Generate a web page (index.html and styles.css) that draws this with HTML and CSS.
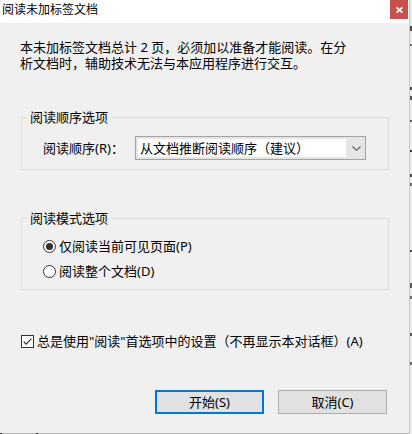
FILE: index.html
```html
<!DOCTYPE html>
<html lang="zh-CN">
<head>
<meta charset="utf-8">
<title>阅读未加标签文档</title>
<link rel="stylesheet" href="styles.css">
</head>
<body>
<div class="dialog">
  <div class="titlebar">
    <span class="title">阅读未加标签文档</span>
    <span class="close"><svg width="7" height="6" viewBox="0 0 7 6"><path d="M0.6 0.4 L6.4 5.6 M6.4 0.4 L0.6 5.6" stroke="#fff" stroke-width="1.8" fill="none"/></svg></span>
  </div>
  <div class="content">
    <p class="message">本未加标签文档总计 2 页，必须加以准备才能阅读。在分析文档时，辅助技术无法与本应用程序进行交互。</p>
    <fieldset class="group group-order">
      <legend>阅读顺序选项</legend>
      <div class="field-row">
        <span class="field-label">阅读顺序(R)：</span>
        <div class="combo">
          <span class="combo-field">从文档推断阅读顺序（建议）</span>
          <span class="combo-arrow"><svg width="9" height="5" viewBox="0 0 9 5"><path d="M0.5 0.5 L4.5 4.3 L8.5 0.5" stroke="#5a5a5a" stroke-width="1.1" fill="none"/></svg></span>
        </div>
      </div>
    </fieldset>
    <fieldset class="group group-mode">
      <legend>阅读模式选项</legend>
      <label class="radio-row">
        <svg class="radio" width="13" height="13" viewBox="0 0 13 13"><circle cx="6.5" cy="6.5" r="6" fill="#fff" stroke="#333"/><circle cx="6.5" cy="6.5" r="3.6" fill="#333"/></svg>
        <span>仅阅读当前可见页面(P)</span>
      </label>
      <label class="radio-row">
        <svg class="radio" width="13" height="13" viewBox="0 0 13 13"><circle cx="6.5" cy="6.5" r="6" fill="#fff" stroke="#333"/></svg>
        <span>阅读整个文档(D)</span>
      </label>
    </fieldset>
    <label class="check-row">
      <svg class="checkbox" width="13" height="13" viewBox="0 0 13 13"><rect x="0.5" y="0.5" width="12" height="12" fill="#fff" stroke="#333"/><path d="M2.6 6.6 L5.2 9.2 L10.4 3.6" stroke="#333" stroke-width="1.2" fill="none"/></svg>
      <span>总是使用"阅读"首选项中的设置（不再显示本对话框）(A)</span>
    </label>
    <div class="buttons">
      <button class="btn btn-default">开始(S)</button>
      <button class="btn">取消(C)</button>
    </div>
  </div>
</div>
<div class="edge-right"></div>
<div class="edge-bottom"></div>
</body>
</html>
```
FILE: styles.css
```css
* { box-sizing: border-box; }
html, body { margin: 0; }
body {
  width: 412px;
  height: 434px;
  overflow: hidden;
  display: grid;
  grid-template-columns: 409px 3px;
  grid-template-rows: 433px 1px;
  font-family: "Noto Sans", "Noto Sans CJK SC", sans-serif;
  font-size: 13px;
  color: #000;
  background: #f4f4f4;
}
.dialog {
  background: #f0f0f0;
  display: flex;
  flex-direction: column;
}
.titlebar {
  height: 23px;
  background: #fff;
  display: flex;
  justify-content: space-between;
  align-items: flex-start;
}
.title {
  font-size: 12px;
  line-height: 16px;
  padding: 2px 0 0 2px;
}
.close {
  width: 18px;
  height: 19px;
  margin-right: 1px;
  background: #c75050;
  display: flex;
  align-items: center;
  justify-content: center;
}
.content {
  padding: 16px 20px 0 21px;
  display: flex;
  flex-direction: column;
}
.message {
  margin: 0 0 0 -1px;
  width: 332px;
  line-height: 16px;
}
.group {
  margin: 0;
  width: 368px;
  border: 1px solid #dcdcdc;
  min-inline-size: 0;
}
.group legend {
  margin-left: -16px;
  padding: 0 3px;
  line-height: 16px;
}
.group-order {
  margin-top: 38px;
  padding: 11px 0 9px 21px;
}
.group-mode {
  margin-top: 40px;
  padding: 10px 0 8px 21px;
  display: flex;
  flex-direction: column;
  gap: 5px;
}
.field-row {
  display: flex;
  align-items: center;
}
.field-label {
  width: 92px;
  line-height: 24px;
}
.combo {
  width: 231px;
  height: 24px;
  border: 1px solid #a3a3a3;
  background: #e5e5e5;
  padding: 2px 0 2px 2px;
  display: flex;
}
.combo-field {
  width: 208px;
  background: #fff;
  line-height: 18px;
  padding-left: 2px;
  white-space: nowrap;
}
.combo-arrow {
  flex: 1;
  display: flex;
  align-items: center;
  justify-content: center;
  padding-left: 2px;
}
.radio-row, .check-row {
  display: flex;
  align-items: center;
  gap: 3px;
  height: 20px;
  line-height: 20px;
}
.radio, .checkbox { flex: none; }
.check-row {
  margin-top: 41px;
}
.buttons {
  margin-top: 39px;
  padding-right: 2px;
  display: flex;
  justify-content: flex-end;
  gap: 14px;
}
.btn {
  width: 109px;
  height: 24px;
  padding: 0;
  font: inherit;
  color: #000;
  background: #e1e1e1;
  border: 1px solid #adadad;
  line-height: 20px;
}
.btn-default {
  border: 2px solid #0078d7;
}
.edge-right {
  grid-row: 1 / 3;
  grid-column: 2;
  border-left: 1px solid #c8c8c8;
  background:
    linear-gradient(to bottom,
      transparent 26px, #4a4a4a 26px, #4a4a4a 31px, transparent 31px,
      transparent 44px, #6a6a6a 44px, #6a6a6a 46px, transparent 46px,
      transparent 87px, #4a4a4a 87px, #4a4a4a 90px, transparent 90px,
      transparent 96px, #5a5a5a 96px, #5a5a5a 100px, transparent 100px,
      transparent 120px, #5a5a5a 120px, #5a5a5a 122px, transparent 122px,
      transparent 150px, #3a3a3a 150px, #3a3a3a 152px, transparent 152px,
      transparent 174px, #4a4a4a 174px, #4a4a4a 177px, transparent 177px,
      transparent 183px, #6a6a6a 183px, #6a6a6a 186px, transparent 186px,
      transparent 250px, #4a4a4a 250px, #4a4a4a 252px, transparent 252px,
      transparent 283px, #5a5a5a 283px, #5a5a5a 288px, transparent 288px,
      transparent 296px, #6a6a6a 296px, #6a6a6a 299px, transparent 299px,
      transparent 333px, #5a5a5a 333px, #5a5a5a 336px, transparent 336px,
      transparent 362px, #6a6a6a 362px, #6a6a6a 365px, transparent 365px),
    #ececec;
}
.edge-bottom {
  grid-row: 2;
  grid-column: 1;
  background:
    linear-gradient(to right,
      transparent 0, #222 0, #222 2px, transparent 2px,
      transparent 36px, #222 36px, #222 38px, transparent 38px),
    #b4b4b4;
}
```
